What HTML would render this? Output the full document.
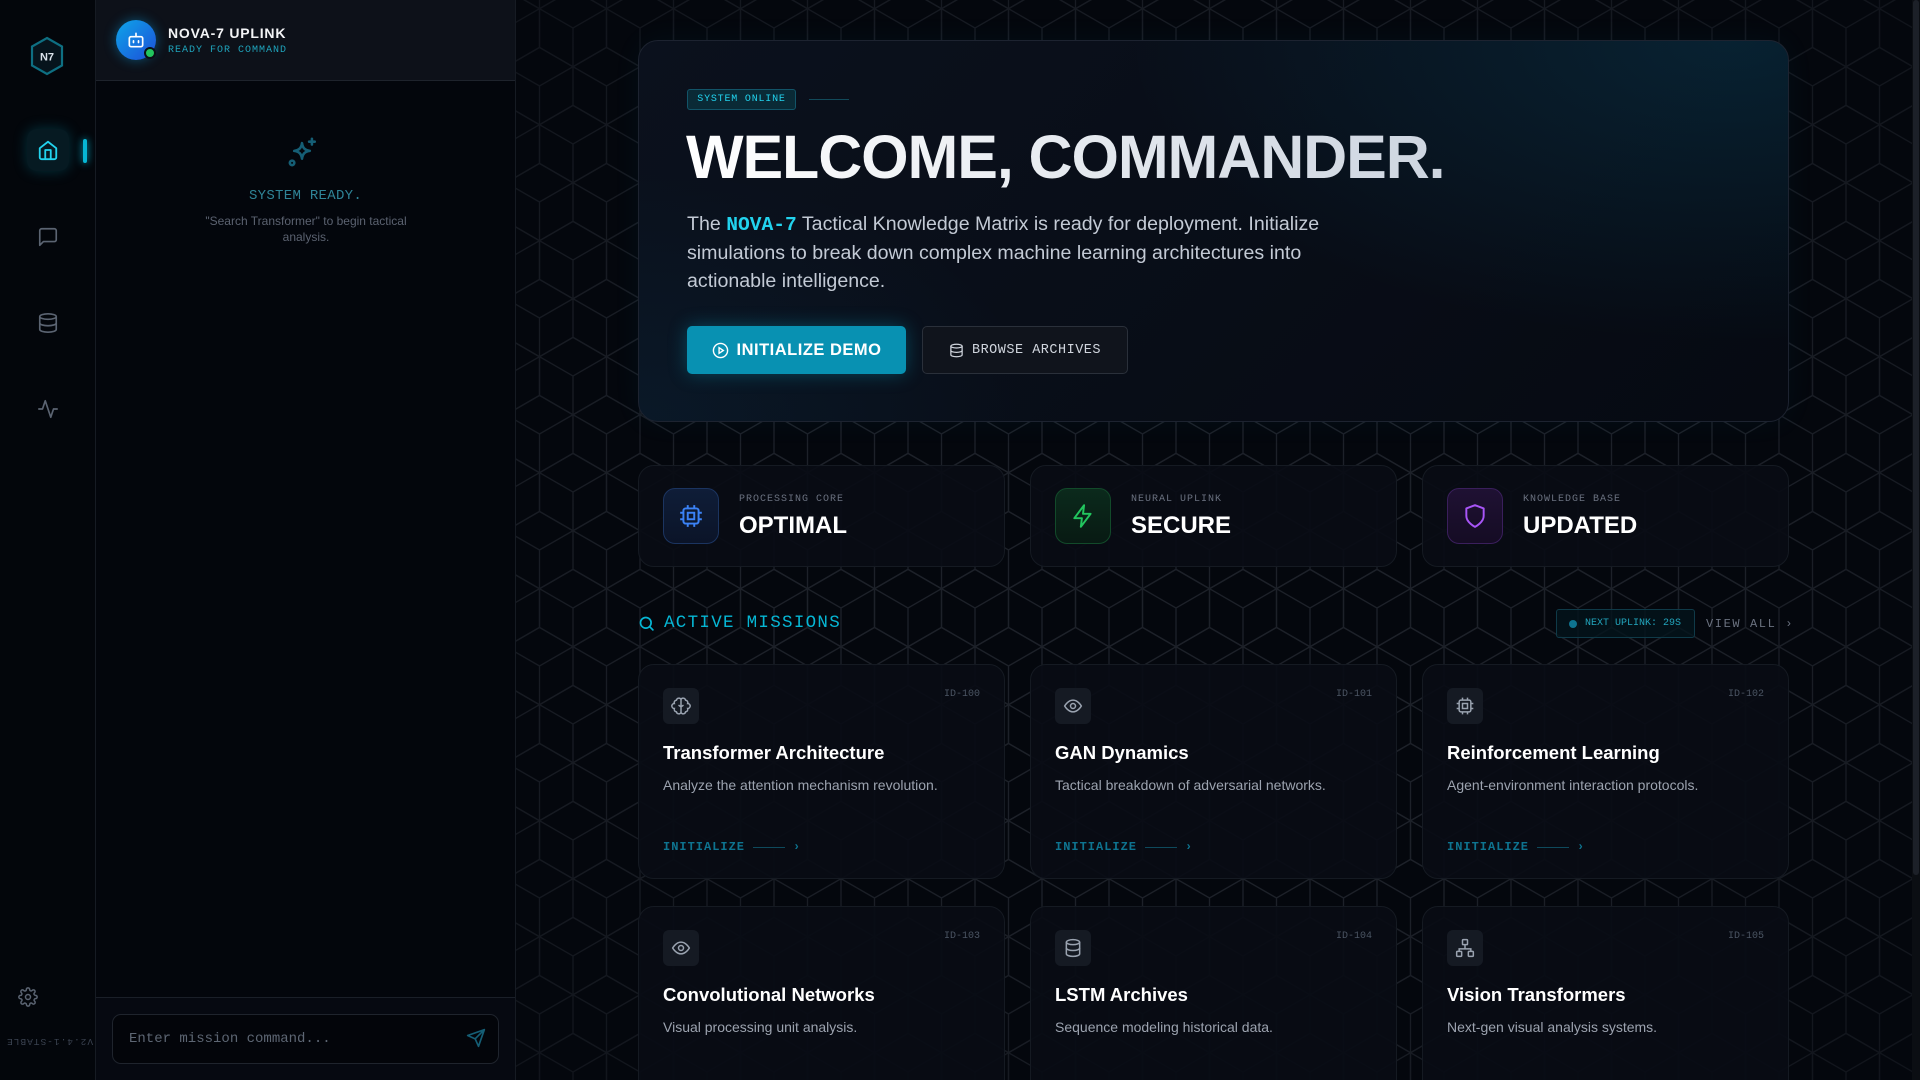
<!DOCTYPE html>
<html><head><meta charset="utf-8"><style>
*{box-sizing:border-box;margin:0;padding:0}
body{width:1920px;height:1080px;overflow:hidden;background:#04070d;font-family:"Liberation Sans",sans-serif;position:relative}
.mono{font-family:"Liberation Mono",monospace}
.rail{position:absolute;left:0;top:0;width:96px;height:1080px;background:#03060b;border-right:1px solid #161b23}
.panel{position:absolute;left:96px;top:0;width:420px;height:1080px;background:#03060c;border-right:1px solid #161b23}
.main{position:absolute;left:516px;top:0;width:1396px;height:1080px;background:#04070d;overflow:hidden}
.abs{position:absolute}
.card{position:absolute;border:1px solid #151a22;border-radius:16px;background:rgba(9,12,20,0.93)}
.ibox{position:absolute;width:56px;height:56px;border-radius:12px;display:flex;align-items:center;justify-content:center}
.lab{position:absolute;font-family:"Liberation Mono",monospace;font-size:10px;letter-spacing:1px;color:#6b7280}
.val{position:absolute;font-weight:bold;font-size:24px;color:#fff}
.m .sq{position:absolute;left:24px;top:23px;width:36px;height:36px;border-radius:6px;background:#151a23;display:flex;align-items:center;justify-content:center}
.m .id{position:absolute;right:24px;top:24px;font-family:"Liberation Mono",monospace;font-size:10px;color:#4b5563}
.m h3{position:absolute;left:24px;top:77px;font-size:18.5px;color:#fff;font-weight:bold}
.m p{position:absolute;left:24px;top:112px;font-size:14px;color:#9ca3af}
.m .go{position:absolute;left:24px;top:175px;font-family:"Liberation Mono",monospace;font-weight:bold;font-size:12px;color:#0e7490;letter-spacing:1px;display:flex;align-items:center}
.m .go i{display:inline-block;width:32px;height:1px;background:#0e4a5c;margin:0 8px}
</style></head><body>
<div class="rail">
  <svg class="abs" style="left:29px;top:36px" width="36" height="40" viewBox="0 0 36 40"><path d="M18 2 L33 10.5 V29.5 L18 38 L3 29.5 V10.5Z" fill="#06141c" stroke="#0e6f82" stroke-width="2.2"/><text x="18" y="24.5" text-anchor="middle" font-family="Liberation Sans" font-weight="bold" font-size="11" fill="#dbe4ec">N7</text></svg>
  <div class="abs" style="left:27px;top:129px;width:42px;height:42px;border-radius:10px;background:#061a22;box-shadow:0 0 14px rgba(6,182,212,0.25)"></div>
  <svg class="abs" style="left:37px;top:139px" width="22" height="22" viewBox="0 0 24 24" fill="none" stroke="#22d3ee" stroke-width="2" stroke-linecap="round" stroke-linejoin="round"><path d="M3 10l9-7 9 7v10a2 2 0 0 1-2 2H5a2 2 0 0 1-2-2z"/><path d="M9 22V12h6v10"/></svg>
  <div class="abs" style="left:83px;top:139px;width:4px;height:24px;border-radius:2px;background:#06b6d4;box-shadow:0 0 8px #06b6d4"></div>
  <svg class="abs" style="left:37px;top:226px" width="22" height="22" viewBox="0 0 24 24" fill="none" stroke="#5b6472" stroke-width="1.8" stroke-linejoin="round"><path d="M21 15a2 2 0 0 1-2 2H7l-4 4V5a2 2 0 0 1 2-2h14a2 2 0 0 1 2 2z"/></svg>
  <svg class="abs" style="left:37px;top:312px" width="22" height="22" viewBox="0 0 24 24" fill="none" stroke="#5b6472" stroke-width="1.8"><ellipse cx="12" cy="5" rx="9" ry="3"/><path d="M21 12c0 1.7-4 3-9 3s-9-1.3-9-3"/><path d="M3 5v14c0 1.7 4 3 9 3s9-1.3 9-3V5"/></svg>
  <svg class="abs" style="left:37px;top:398px" width="22" height="22" viewBox="0 0 24 24" fill="none" stroke="#5b6472" stroke-width="1.8" stroke-linecap="round" stroke-linejoin="round"><path d="M22 12h-4l-3 9L9 3l-3 9H2"/></svg>
  <svg class="abs" style="left:18px;top:987px" width="20" height="20" viewBox="0 0 24 24" fill="none" stroke="#5b6472" stroke-width="1.8"><circle cx="12" cy="12" r="3"/><path d="M19.4 15a1.7 1.7 0 0 0 .3 1.8l.1.1a2 2 0 1 1-2.8 2.8l-.1-.1a1.7 1.7 0 0 0-1.8-.3 1.7 1.7 0 0 0-1 1.5V21a2 2 0 1 1-4 0v-.1a1.7 1.7 0 0 0-1.1-1.5 1.7 1.7 0 0 0-1.8.3l-.1.1a2 2 0 1 1-2.8-2.8l.1-.1a1.7 1.7 0 0 0 .3-1.8 1.7 1.7 0 0 0-1.5-1H3a2 2 0 1 1 0-4h.1a1.7 1.7 0 0 0 1.5-1.1 1.7 1.7 0 0 0-.3-1.8l-.1-.1a2 2 0 1 1 2.8-2.8l.1.1a1.7 1.7 0 0 0 1.8.3H9a1.7 1.7 0 0 0 1-1.5V3a2 2 0 1 1 4 0v.1a1.7 1.7 0 0 0 1 1.5 1.7 1.7 0 0 0 1.8-.3l.1-.1a2 2 0 1 1 2.8 2.8l-.1.1a1.7 1.7 0 0 0-.3 1.8V9a1.7 1.7 0 0 0 1.5 1H21a2 2 0 1 1 0 4h-.1a1.7 1.7 0 0 0-1.5 1z"/></svg>
  <div class="abs mono" style="left:6px;top:1036px;font-size:9.5px;letter-spacing:1px;color:#3a4250;transform:rotate(180deg)">V2.4.1-STABLE</div>
</div>
<div class="panel">
  <div class="abs" style="left:0;top:0;width:419px;height:81px;background:#0d1119;border-bottom:1px solid #1e232c"></div>
  <div class="abs" style="left:20px;top:20px;width:40px;height:40px;border-radius:50%;background:linear-gradient(135deg,#0ea5e9,#1d4ed8);box-shadow:0 0 12px rgba(14,165,233,0.45)"></div>
  <svg class="abs" style="left:30px;top:30px" width="20" height="20" viewBox="0 0 24 24" fill="none" stroke="#fff" stroke-width="2" stroke-linecap="round"><rect x="4" y="8" width="16" height="12" rx="2"/><path d="M12 8V4M9 13v2M15 13v2"/></svg>
  <div class="abs" style="left:48px;top:47px;width:12px;height:12px;border-radius:50%;background:#22c55e;border:2px solid #0b0f16"></div>
  <div class="abs" style="left:72px;top:25px;font-weight:bold;font-size:14px;color:#f3f4f6;letter-spacing:0.8px">NOVA-7 UPLINK</div>
  <div class="abs mono" style="left:72px;top:45px;font-size:10px;color:#1fa3bb;letter-spacing:1px">READY FOR COMMAND</div>
  <svg class="abs" style="left:189px;top:136px" width="34" height="34" viewBox="0 0 24 24" fill="none" stroke="#155e75" stroke-width="1.8" stroke-linecap="round" stroke-linejoin="round"><path d="M12 5c.5 3.5 2 5 5.5 5.5C14 11 12.5 12.5 12 16c-.5-3.5-2-5-5.5-5.5C10 10 11.5 8.5 12 5z"/><path d="M19 2v4M17 4h4"/><circle cx="5" cy="19" r="1.6"/></svg>
  <div class="abs mono" style="left:0;width:419px;top:188px;text-align:center;font-size:14px;color:#2f8497;letter-spacing:0.3px">SYSTEM READY.</div>
  <div class="abs" style="left:100px;width:220px;top:213px;text-align:center;font-size:12px;line-height:16px;color:#5b6270">"Search Transformer" to begin tactical analysis.</div>
  <div class="abs" style="left:0;top:997px;width:419px;height:83px;background:#060911;border-top:1px solid #1a1f28"></div>
  <div class="abs" style="left:16px;top:1014px;width:387px;height:50px;border:1px solid #1f242d;border-radius:9px;background:#03050a"></div>
  <div class="abs mono" style="left:33px;top:1031px;font-size:14px;color:#5d6673">Enter mission command...</div>
  <svg class="abs" style="left:370px;top:1028px" width="20" height="20" viewBox="0 0 24 24" fill="none" stroke="#155e75" stroke-width="2" stroke-linejoin="round"><path d="M22 2L11 13M22 2l-7 20-4-9-9-4z"/></svg>
</div>
<div class="main">
  <svg class="abs" style="left:0;top:0" width="1396" height="1080"><defs><pattern id="hx" width="67" height="116" patternUnits="userSpaceOnUse" x="-10" y="-30">
  <g fill="none" stroke="#1d2129" stroke-width="1.3">
  <path d="M33.5 -38.7L67 -19.35V19.35L33.5 38.7L0 19.35V-19.35Z M0 -19.35L33.5 0L67 -19.35 M33.5 0V38.7"/>
  <path d="M0 19.35L33.5 38.7V77.4L0 96.75L-33.5 77.4V38.7Z M-33.5 38.7L0 58L33.5 38.7 M0 58V96.75"/>
  <path d="M67 19.35L100.5 38.7V77.4L67 96.75L33.5 77.4V38.7Z M33.5 38.7L67 58L100.5 38.7 M67 58V96.75"/>
  <path d="M33.5 77.4L67 96.75V135.45L33.5 154.8L0 135.45V96.75Z M0 96.75L33.5 116L67 96.75 M33.5 116V154.8"/>
  </g></pattern>
  <radialGradient id="vg" cx="0.5" cy="0.5" r="0.7"><stop offset="0.5" stop-color="#04070d" stop-opacity="0"/><stop offset="1" stop-color="#04070d" stop-opacity="0.5"/></radialGradient></defs>
  <rect width="1396" height="1080" fill="url(#hx)"/><rect width="1396" height="1080" fill="url(#vg)"/></svg>

  <div class="abs" style="left:122px;top:40px;width:1151px;height:382px;border:1px solid #1d2330;border-radius:20px;background:radial-gradient(ellipse 600px 300px at 95% 0%,rgba(8,110,150,0.22),transparent),radial-gradient(ellipse 400px 250px at 0% 100%,rgba(8,80,120,0.14),transparent),linear-gradient(135deg,#0b111d,#060a12);box-shadow:0 0 30px rgba(6,182,212,0.05)"></div>
  <div class="abs mono" style="left:171px;top:89px;width:109px;height:21px;border:1px solid #125468;border-radius:3px;background:#0a2a36;font-size:10px;color:#22d3ee;letter-spacing:0.8px;text-align:center;line-height:19px">SYSTEM ONLINE</div>
  <div class="abs" style="left:293px;top:99px;width:40px;height:1px;background:#124a5a"></div>
  <div class="abs" style="left:170px;top:119px;font-weight:bold;font-size:61px;letter-spacing:-1.1px;line-height:76px;background:linear-gradient(90deg,#ffffff,#cdd5e0);-webkit-background-clip:text;color:transparent">WELCOME, COMMANDER.</div>
  <div class="abs" style="left:171px;top:210px;width:690px;font-size:19.6px;line-height:28px;color:#c3cad5">The <span class="mono" style="color:#22d3ee;font-weight:bold">NOVA-7</span> Tactical Knowledge Matrix is ready for deployment. Initialize simulations to break down complex machine learning architectures into actionable intelligence.</div>
  <div class="abs" style="left:171px;top:326px;width:219px;height:48px;border-radius:5px;background:#0891b2;box-shadow:0 0 18px rgba(8,145,178,0.4);display:flex;align-items:center;justify-content:center;gap:8px;color:#fff;font-weight:bold;font-size:16.5px;letter-spacing:0.5px"><svg width="17" height="17" viewBox="0 0 24 24" fill="none" stroke="#fff" stroke-width="2"><circle cx="12" cy="12" r="10"/><path d="M10 8l6 4-6 4z"/></svg>INITIALIZE DEMO</div>
  <div class="abs mono" style="left:406px;top:326px;width:206px;height:48px;border-radius:5px;background:#10141c;border:1px solid #2a303a;display:flex;align-items:center;justify-content:center;gap:8px;color:#d0d5dd;font-size:13.5px;letter-spacing:0.5px"><svg width="15" height="15" viewBox="0 0 24 24" fill="none" stroke="#d0d5dd" stroke-width="2"><ellipse cx="12" cy="5" rx="9" ry="3"/><path d="M21 12c0 1.7-4 3-9 3s-9-1.3-9-3"/><path d="M3 5v14c0 1.7 4 3 9 3s9-1.3 9-3V5"/></svg>BROWSE ARCHIVES</div>

  <div class="card" style="left:122px;top:465px;width:367px;height:102px"></div>
  <div class="card" style="left:514px;top:465px;width:367px;height:102px"></div>
  <div class="card" style="left:906px;top:465px;width:367px;height:102px"></div>
  <div class="ibox" style="left:147px;top:488px;background:linear-gradient(#0f1d38,#0b1428);border:1px solid #1b3460"><svg width="26" height="26" viewBox="0 0 24 24" fill="none" stroke="#3b82f6" stroke-width="1.8"><rect x="5" y="5" width="14" height="14" rx="2"/><rect x="9" y="9" width="6" height="6"/><path d="M9 2v3M15 2v3M9 19v3M15 19v3M2 9h3M2 15h3M19 9h3M19 15h3"/></svg></div>
  <div class="lab" style="left:223px;top:494px">PROCESSING CORE</div><div class="val" style="left:223px;top:512px">OPTIMAL</div>
  <div class="ibox" style="left:539px;top:488px;background:linear-gradient(#0b2a1c,#081a13);border:1px solid #124a2a"><svg width="26" height="26" viewBox="0 0 24 24" fill="none" stroke="#22c55e" stroke-width="1.8" stroke-linejoin="round"><path d="M13 2L4 14h7l-1 8 9-12h-7z"/></svg></div>
  <div class="lab" style="left:615px;top:494px">NEURAL UPLINK</div><div class="val" style="left:615px;top:512px">SECURE</div>
  <div class="ibox" style="left:931px;top:488px;background:linear-gradient(#1f1133,#150c24);border:1px solid #3a1f5c"><svg width="26" height="26" viewBox="0 0 24 24" fill="none" stroke="#a855f7" stroke-width="1.8" stroke-linejoin="round"><path d="M12 22s8-4 8-10V5l-8-3-8 3v7c0 6 8 10 8 10z"/></svg></div>
  <div class="lab" style="left:1007px;top:494px">KNOWLEDGE BASE</div><div class="val" style="left:1007px;top:512px">UPDATED</div>

  <svg class="abs" style="left:122px;top:615px" width="17" height="17" viewBox="0 0 24 24" fill="none" stroke="#06b6d4" stroke-width="2.4" stroke-linecap="round"><circle cx="11" cy="11" r="7.5"/><path d="M21 21l-4.5-4.5"/></svg>
  <div class="abs mono" style="left:148px;top:613px;font-size:17.5px;color:#06b6d4;letter-spacing:1.3px">ACTIVE MISSIONS</div>
  <div class="abs mono" style="left:1040px;top:609px;width:139px;height:29px;border:1px solid #0f3a48;border-radius:3px;background:rgba(4,20,28,0.8);font-size:10px;color:#22a5bd;display:flex;align-items:center;padding-left:12px;gap:8px"><span style="width:8px;height:8px;border-radius:50%;background:#0e7490"></span>NEXT UPLINK: 29S</div>
  <div class="abs mono" style="left:1190px;top:617px;font-size:12px;color:#6b7280;letter-spacing:1.6px">VIEW ALL ›</div>

  <div class="card m" style="left:122px;top:664px;width:367px;height:215px"><div class="sq"><svg width="20" height="20" viewBox="0 0 24 24" fill="none" stroke="#9aa3b0" stroke-width="1.8"><path d="M12 4a3 3 0 0 0-5.5 1A3 3 0 0 0 4 9a3 3 0 0 0 0 6 3 3 0 0 0 2.5 4A3 3 0 0 0 12 20zM12 4a3 3 0 0 1 5.5 1A3 3 0 0 1 20 9a3 3 0 0 1 0 6 3 3 0 0 1-2.5 4A3 3 0 0 1 12 20zM12 4v16M9 11l3 2 3-2"/></svg></div><div class="id">ID-100</div><h3>Transformer Architecture</h3><p>Analyze the attention mechanism revolution.</p><div class="go">INITIALIZE<i></i>›</div></div>
  <div class="card m" style="left:514px;top:664px;width:367px;height:215px"><div class="sq"><svg width="20" height="20" viewBox="0 0 24 24" fill="none" stroke="#9aa3b0" stroke-width="1.8"><path d="M2 12s4-7 10-7 10 7 10 7-4 7-10 7S2 12 2 12z"/><circle cx="12" cy="12" r="3"/></svg></div><div class="id">ID-101</div><h3>GAN Dynamics</h3><p>Tactical breakdown of adversarial networks.</p><div class="go">INITIALIZE<i></i>›</div></div>
  <div class="card m" style="left:906px;top:664px;width:367px;height:215px"><div class="sq"><svg width="20" height="20" viewBox="0 0 24 24" fill="none" stroke="#9aa3b0" stroke-width="1.8"><rect x="5" y="5" width="14" height="14" rx="2"/><rect x="9" y="9" width="6" height="6"/><path d="M9 2v3M15 2v3M9 19v3M15 19v3M2 9h3M2 15h3M19 9h3M19 15h3"/></svg></div><div class="id">ID-102</div><h3>Reinforcement Learning</h3><p>Agent-environment interaction protocols.</p><div class="go">INITIALIZE<i></i>›</div></div>
  <div class="card m" style="left:122px;top:906px;width:367px;height:215px"><div class="sq"><svg width="20" height="20" viewBox="0 0 24 24" fill="none" stroke="#9aa3b0" stroke-width="1.8"><path d="M2 12s4-7 10-7 10 7 10 7-4 7-10 7S2 12 2 12z"/><circle cx="12" cy="12" r="3"/></svg></div><div class="id">ID-103</div><h3>Convolutional Networks</h3><p>Visual processing unit analysis.</p></div>
  <div class="card m" style="left:514px;top:906px;width:367px;height:215px"><div class="sq"><svg width="20" height="20" viewBox="0 0 24 24" fill="none" stroke="#9aa3b0" stroke-width="1.8"><ellipse cx="12" cy="5" rx="8" ry="3"/><path d="M20 12c0 1.7-3.6 3-8 3s-8-1.3-8-3"/><path d="M4 5v14c0 1.7 3.6 3 8 3s8-1.3 8-3V5"/></svg></div><div class="id">ID-104</div><h3>LSTM Archives</h3><p>Sequence modeling historical data.</p></div>
  <div class="card m" style="left:906px;top:906px;width:367px;height:215px"><div class="sq"><svg width="20" height="20" viewBox="0 0 24 24" fill="none" stroke="#9aa3b0" stroke-width="1.8"><rect x="9" y="2" width="6" height="6" rx="1"/><rect x="2" y="16" width="6" height="6" rx="1"/><rect x="16" y="16" width="6" height="6" rx="1"/><path d="M5 16v-3h14v3M12 8v5"/></svg></div><div class="id">ID-105</div><h3>Vision Transformers</h3><p>Next-gen visual analysis systems.</p></div>
</div>
<div class="abs" style="left:1912px;top:0;width:8px;height:1080px;background:#0b0e13"></div>
<div class="abs" style="left:1913px;top:0;width:6px;height:875px;background:#1c2028;border-radius:3px"></div>
</body></html>
